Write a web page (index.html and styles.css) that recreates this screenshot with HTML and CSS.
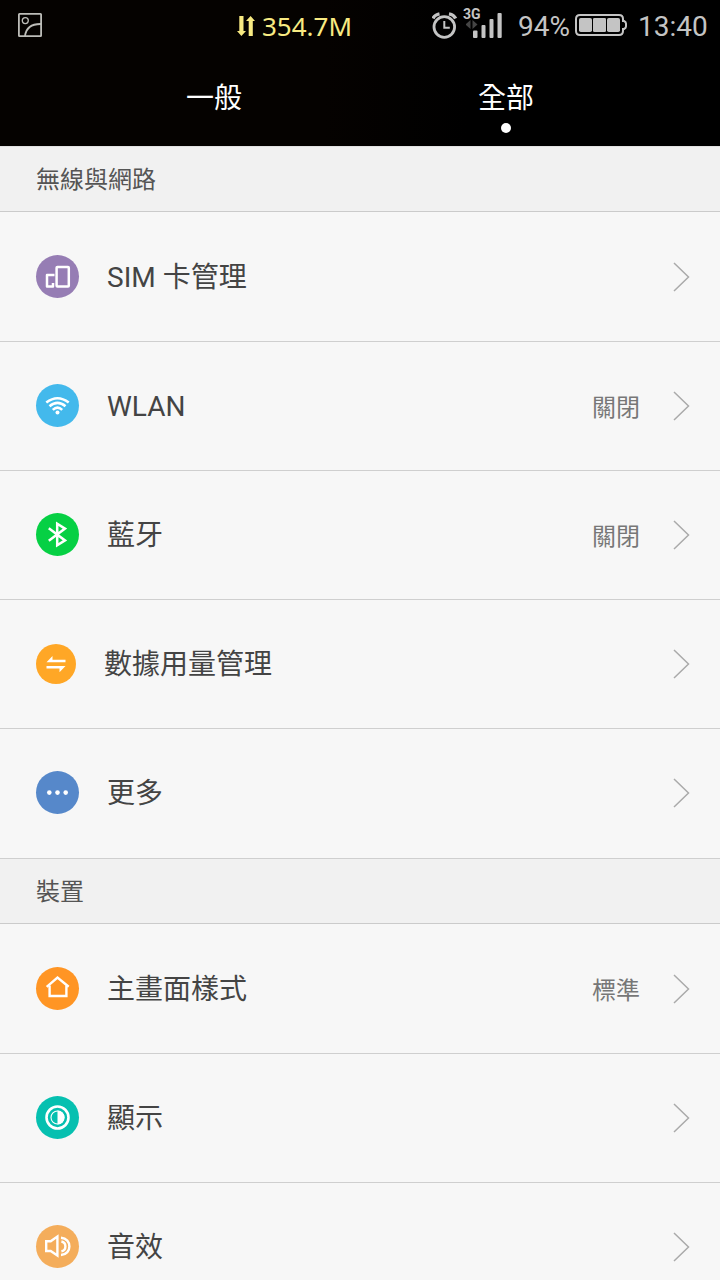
FILE: index.html
```html
<!DOCTYPE html>
<html lang="zh-Hant">
<head>
    <meta charset="UTF-8">
    <meta name="viewport" content="width=device-width, initial-scale=1.0">
    <title>設定</title>
    <link rel="stylesheet" href="styles.css">
</head>
<body>
    <header class="header">
        <div class="status-bar">
            <svg class="picture-icon" width="24" height="24" viewBox="0 0 24 24" fill="none" stroke="#bdbdb8" stroke-width="1.8">
                <rect x="0.9" y="0.9" width="22.2" height="22.2" rx="0.6"/>
                <circle cx="7.3" cy="7.6" r="3" stroke-width="1.3"/>
                <path d="M7 23C8 15.500 13 10.800 23 11"/>
            </svg>
            <div class="traffic">
                <svg width="18" height="20" viewBox="0 0 18 20" fill="#f8ea82">
                    <path d="M2.300 0H6.500V15H9L4.400 20L0 15H2.300Z"/>
                    <path d="M11.700 20H15.800V5H18L13.600 0L9 5H11.700Z"/>
                </svg>
                <span>354.7M</span>
            </div>
            <svg class="alarm-icon" width="26" height="27" viewBox="0 0 26 27" fill="none" stroke="#c4c4c4">
                <circle cx="12.300" cy="15" r="10.300" stroke-width="2.800"/>
                <path d="M12.300 9V15.800H17.800" stroke-width="2"/>
                <path d="M1 6.500Q2.500 2.800 7.500 1.800M17 1.800Q22 2.800 23.600 6.500" stroke-width="3.400"/>
            </svg>
            <div class="network">
                <span class="network-type">3G</span>
                <svg width="39" height="26" viewBox="0 0 39 26" fill="#c4c4c4">
                    <path d="M-0.500 11.500L4.500 7V16ZM11.500 11.500L6.500 7V16Z" fill="#454545"/>
                    <rect x="7" y="17.500" width="4.500" height="7.500" rx="1"/>
                    <rect x="15.500" y="12" width="4" height="13" rx="1"/>
                    <rect x="23.500" y="6" width="4" height="19" rx="1"/>
                    <rect x="31.500" y="0" width="4.200" height="25" rx="1"/>
                </svg>
            </div>
            <span class="percent">94%</span>
            <svg class="battery-icon" width="52" height="22" viewBox="0 0 52 22" fill="#c4c4c4">
                <path d="M5 1H44Q48 1 48 5V7H49Q51 8 51 9.500V12.500Q51 14 49 15H48V17Q48 21 44 21H5Q1 21 1 17V5Q1 1 5 1Z" fill="none" stroke="#c4c4c4" stroke-width="2"/>
                <rect x="4" y="4" width="13" height="14" rx="1.800"/>
                <rect x="18" y="4" width="13" height="14" rx="1.300"/>
                <rect x="32" y="4" width="13" height="14" rx="1.800"/>
            </svg>
            <span class="clock">13:40</span>
        </div>
        <nav class="tabs">
            <div class="tab">一般</div>
            <div class="tab active">全部</div>
        </nav>
    </header>

    <main>
        <h2 class="section first">無線與網路</h2>
        <div class="row tall">
            <svg class="icon purple" viewBox="0 0 43 43" fill="none" stroke="#fff" stroke-width="2.500" stroke-linejoin="round">
                <rect x="20.600" y="12" width="12.200" height="19.500" rx="0.8"/>
                <path d="M18.500 19.900H11V31.500H17V28"/>
            </svg>
            <span class="label">SIM 卡管理</span>
            <svg class="arrow" viewBox="0 0 17 30"><path d="M1 1L15.500 15L1 29"/></svg>
        </div>
        <div class="row">
            <svg class="icon blue" viewBox="0 0 43 43" fill="none" stroke="#fff" stroke-width="2.600">
                <path d="M10.300 18.500Q21.500 10 32.700 18.500"/>
                <path d="M13.500 22.300Q21.500 15.500 29.500 22.300"/>
                <path d="M16.800 25.900Q21.500 21.500 26.200 25.900"/>
                <circle cx="21.500" cy="28.600" r="2" fill="#fff" stroke="none"/>
            </svg>
            <span class="label">WLAN</span>
            <span class="value">關閉</span>
            <svg class="arrow" viewBox="0 0 17 30"><path d="M1 1L15.500 15L1 29"/></svg>
        </div>
        <div class="row">
            <svg class="icon green" viewBox="0 0 43 43" fill="none" stroke="#fff" stroke-width="2.500">
                <path d="M12.800 15.300L29 27.400L21.200 32.300V10.700L29 15.600L12.800 27.700"/>
            </svg>
            <span class="label">藍牙</span>
            <span class="value">關閉</span>
            <svg class="arrow" viewBox="0 0 17 30"><path d="M1 1L15.500 15L1 29"/></svg>
        </div>
        <div class="row">
            <svg class="icon small amber" viewBox="0 0 40 40" fill="#fff">
                <path d="M10.500 18.300L16.500 12V15.800H29.500V18.300H10.500Z"/>
                <path d="M29.500 22.100L23.500 28.200V24.600H10.500V22.100H29.500Z"/>
            </svg>
            <span class="label">數據用量管理</span>
            <svg class="arrow" viewBox="0 0 17 30"><path d="M1 1L15.500 15L1 29"/></svg>
        </div>
        <div class="row tall more">
            <svg class="icon indigo" viewBox="0 0 43 43" fill="#fff">
                <circle cx="13.300" cy="21.600" r="2.300"/>
                <circle cx="21.500" cy="21.600" r="2.300"/>
                <circle cx="29.700" cy="21.600" r="2.300"/>
            </svg>
            <span class="label">更多</span>
            <svg class="arrow" viewBox="0 0 17 30"><path d="M1 1L15.500 15L1 29"/></svg>
        </div>

        <h2 class="section">裝置</h2>
        <div class="row tall">
            <svg class="icon orange" viewBox="0 0 43 43" fill="none" stroke="#fff" stroke-width="2.400">
                <path d="M10.700 19.800L21.500 10.600L32.700 19.800"/>
                <path d="M13.600 18.500V29H30.400V18.500"/>
            </svg>
            <span class="label">主畫面樣式</span>
            <span class="value">標準</span>
            <svg class="arrow" viewBox="0 0 17 30"><path d="M1 1L15.500 15L1 29"/></svg>
        </div>
        <div class="row">
            <svg class="icon teal" viewBox="0 0 43 43" fill="none" stroke="#fff">
                <circle cx="21.500" cy="21.500" r="11" stroke-width="2.600"/>
                <circle cx="21.500" cy="21.500" r="6.500" stroke-width="1.100"/>
                <path d="M21.500 14.500A7 7 0 0 1 21.500 28.500Z" fill="#fff" stroke="none"/>
            </svg>
            <span class="label">顯示</span>
            <svg class="arrow" viewBox="0 0 17 30"><path d="M1 1L15.500 15L1 29"/></svg>
        </div>
        <div class="row">
            <svg class="icon sand" viewBox="0 0 43 43" fill="none" stroke="#fff" stroke-width="2.400">
                <path d="M10.200 16.200H14.700L21.400 11.500V30.500L14.700 26H10.200Z"/>
                <path d="M25.400 16.500A5 5 0 0 1 25.400 26.300"/>
                <path d="M25 12.700C36.200 13.500 36.200 29.300 25 30"/>
            </svg>
            <span class="label">音效</span>
            <svg class="arrow" viewBox="0 0 17 30"><path d="M1 1L15.500 15L1 29"/></svg>
        </div>
    </main>
</body>
</html>
```
FILE: styles.css
```css
*{
    margin: 0;
    padding: 0;
    box-sizing: border-box;
}
body{
    height: 1280px;
    overflow: hidden;
    background-color: #f7f7f7;
    font-family: Roboto, "Noto Sans CJK TC", sans-serif;
    color: #444;
}
svg{
    display: block;
    flex-shrink: 0;
}

/* header */
.header{
    height: 146px;
    background: linear-gradient(to right, #050200, #050200 45%, #000 65%);
}
.status-bar{
    height: 52px;
    display: flex;
    align-items: center;
    padding: 0 12px 0 18px;
    color: #c4c4c4;
    font-size: 29px;
    line-height: 52px;
    white-space: nowrap;
}
.picture-icon{
    margin-bottom: 2px;
}
.traffic{
    width: 195px;
    margin-left: 195px;
    display: flex;
    align-items: center;
    gap: 7px;
    color: #f8ea82;
    font-family: "Noto Sans", sans-serif;
    font-size: 26px;
}
.alarm-icon{
    margin-bottom: 2px;
}
.network{
    width: 45px;
    height: 52px;
    margin-left: 5px;
    padding-top: 8px;
}
.network-type{
    display: block;
    height: 5px;
    font-size: 14px;
    font-weight: bold;
    line-height: 13px;
}
.network svg{
    margin-left: 3px;
}
.percent{
    width: 57px;
    margin-left: 10px;
    padding-top: 2px;
    font-size: 28px;
}
.battery-icon{
    margin-bottom: 2px;
}
.clock{
    margin-left: 11px;
    padding-top: 2px;
    font-size: 28px;
}
.tabs{
    height: 94px;
    padding: 0 68px;
    display: grid;
    grid-template-columns: 1fr 1fr;
}
.tab{
    display: flex;
    flex-direction: column;
    align-items: center;
    padding-top: 27px;
    color: #fff;
    font-size: 28px;
    line-height: 40px;
}
.active::after{
    content: "";
    width: 10px;
    height: 10px;
    margin-top: 4px;
    border-radius: 50%;
    background-color: #fff;
}

/* list */
.section{
    height: 65px;
    padding-left: 36px;
    border-bottom: 1px solid #cbcbcb;
    background-color: #f1f1f1;
    color: #555;
    font-size: 24px;
    font-weight: normal;
    line-height: 67px;
}
.first{
    height: 66px;
    border-top: 1px solid #e2e2e2;
}
.row{
    height: 129px;
    display: flex;
    align-items: center;
    padding: 0 30px 1px 36px;
    border-bottom: 1px solid #cfcfcf;
}
.tall{
    height: 130px;
    padding-bottom: 0;
}
.more{
    padding-bottom: 2px;
}
.icon{
    width: 43px;
    height: 43px;
    border-radius: 50%;
}
.small{
    width: 40px;
    height: 40px;
}
.label{
    flex: 1;
    margin-left: 28px;
    padding-top: 3px;
    font-size: 28px;
    line-height: 40px;
}
.value{
    margin-bottom: 1px;
    color: #777;
    font-size: 24px;
}
.arrow{
    width: 17px;
    height: 30px;
    margin-left: 33px;
    fill: none;
    stroke: #aaa;
    stroke-width: 1.5;
}

.purple{ background-color: #967db4; }
.blue{ background-color: #43b9ec; }
.green{ background-color: #06d044; }
.amber{ background-color: #ffa726; }
.indigo{ background-color: #5688ca; }
.orange{ background-color: #ff9524; }
.teal{ background-color: #06c0b0; }
.sand{ background-color: #f4ad5b; }
```
